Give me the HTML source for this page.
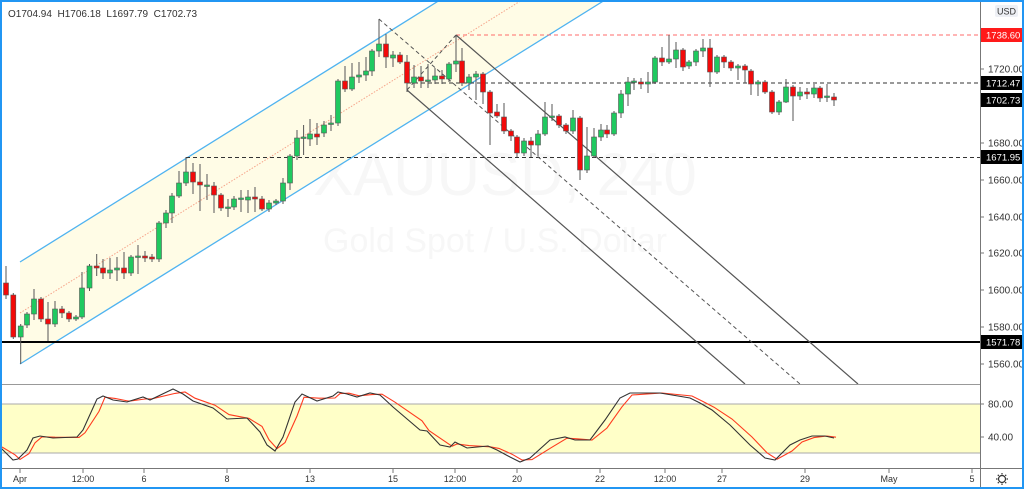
<!DOCTYPE html>
<html><head><meta charset="utf-8"><style>
html,body{margin:0;padding:0;background:#fff;}
#w{position:relative;width:1024px;height:489px;overflow:hidden;font-family:"Liberation Sans",sans-serif;}
svg text{font-family:"Liberation Sans",sans-serif;}
</style></head><body><div id="w">
<svg id="s" width="1024" height="489" xmlns="http://www.w3.org/2000/svg">
<rect x="0" y="0" width="1024" height="489" fill="#fff"/>
<text x="505" y="195" font-size="60" fill="#f7f7f7" text-anchor="middle">XAUUSD, 240</text>
<text x="495" y="252" font-size="34" fill="#f7f7f7" text-anchor="middle">Gold Spot / U.S. Dollar</text>
<polygon points="20,262 440,0 605,0 20,364" fill="#fffce6"/>
<line x1="20" y1="262" x2="440" y2="0" stroke="#4fb3f0" stroke-width="1.3"/>
<line x1="20" y1="364" x2="605" y2="0" stroke="#4fb3f0" stroke-width="1.3"/>
<line x1="20" y1="313" x2="522" y2="0" stroke="#f6a48a" stroke-width="1" stroke-dasharray="1.5,1.5"/>
<line x1="186" y1="157.5" x2="980" y2="157.5" stroke="#333" stroke-dasharray="4,3"/>
<line x1="407" y1="83" x2="980" y2="83" stroke="#333" stroke-dasharray="4,3"/>
<line x1="456" y1="35" x2="980" y2="35" stroke="#ff6b6b" stroke-dasharray="4,3"/>
<line x1="0" y1="342" x2="980" y2="342" stroke="#000" stroke-width="2"/>
<line x1="379" y1="19" x2="800" y2="384" stroke="#555" stroke-dasharray="4,3"/>
<line x1="407" y1="90" x2="456" y2="35" stroke="#555" stroke-dasharray="4,3"/>
<line x1="407" y1="90" x2="745" y2="384" stroke="#555" stroke-width="1.2"/>
<line x1="456" y1="35" x2="858" y2="384" stroke="#555" stroke-width="1.2"/>
<g id="c"></g>
<rect x="0" y="384" width="980" height="85" fill="#fff"/>
<line x1="0" y1="384.5" x2="980" y2="384.5" stroke="#999"/>
<rect x="0" y="404" width="980" height="49" fill="#ffffc8"/>
<line x1="0" y1="404" x2="980" y2="404" stroke="#aaa"/>
<line x1="0" y1="453" x2="980" y2="453" stroke="#aaa"/>
<polyline id="d" fill="none" stroke="#ff3b1f" stroke-width="1.1"/>
<polyline id="k" fill="none" stroke="#333" stroke-width="1.1"/>
<line x1="0" y1="468.5" x2="1024" y2="468.5" stroke="#777"/>
<line x1="980.5" y1="0" x2="980.5" y2="489" stroke="#777"/>
<g id="ax" font-size="10" fill="#333"></g>
<rect x="995" y="5" width="23" height="12" rx="2" fill="#eef0f5"/>
<text x="1006.5" y="14.5" font-size="9" fill="#333" text-anchor="middle">USD</text>
<text x="8" y="17" font-size="10" fill="#333">O1704.94&#160;&#160;H1706.18&#160;&#160;L1697.79&#160;&#160;C1702.73</text>
<g transform="translate(1002,479)" fill="none" stroke="#333" stroke-width="1.2">
<circle r="3.5"/><path d="M0,-6V-4.5M0,6V4.5M-6,0H-4.5M6,0H4.5M-4.2,-4.2L-3.2,-3.2M4.2,4.2L3.2,3.2M-4.2,4.2L-3.2,3.2M4.2,-4.2L3.2,-3.2"/>
</g>
<rect x="1" y="1" width="1022" height="487" fill="none" stroke="#2196f3" stroke-width="2"/>
</svg>
<script>
var NS="http://www.w3.org/2000/svg";
function el(p,t,a){var e=document.createElementNS(NS,t);for(var k in a)e.setAttribute(k,a[k]);p.appendChild(e);return e;}
var C=[[6,283,295,'r',266,299],[13.3,295,337,'r',293,339],[20.7,326,337,'g',324,364],[27,314,325,'g',312,328],[34,299,314,'g',289,320],[41,299,319,'r',297,322],[48,319,324,'r',302,341],[55,309,324,'g',301,327],[62,309,313,'r',306,318],[69,313,319,'r',311,322],[76,317,319,'g',315,321],[82,288,317,'g',272,319],[89.5,266,288,'g',264,291],[96.7,266,268,'r',254,276],[103,268,273,'r',259,279],[110,270,273,'g',258,279],[117,268,270,'g',257,281],[124,268,273,'r',252,279],[131,257,273,'g',255,276],[138,256,257,'g',245,274],[145,256,258,'r',251,262],[152,257,259,'r',254,262],[159,223,259,'g',221,262],[166,213,223,'g',210,228],[172,196,213,'g',193,223],[179,183,196,'g',171,198],[186,172,183,'g',157,186],[193,172,182,'r',163,194],[200,182,185,'r',164,211],[207,185,186,'g',174,200],[214,186,195,'r',182,213],[221,195,208,'r',193,211],[228,207,208,'g',199,217],[234,199,207,'g',196,210],[241,198,199,'g',190,212],[248,197,200,'g',190,213],[255,197,199,'r',187,212],[262,199,209,'r',196,211],[269,203,209,'g',200,212],[276,201,203,'g',199,205],[283,183,201,'g',178,204],[290,156,183,'g',154,190],[297,138,156,'g',130,160],[303.6,137,138,'g',125,155],[310,134,139,'g',119,146],[317,134,137,'r',123,145],[324,125,133,'g',121,137],[331,123,124,'g',115,131],[338,81,123,'g',79,126],[345,81,89,'r',66,92],[352,77,89,'g',63,91],[359,75,77,'g',62,83],[366,71,75,'g',57,81],[372,51,71,'g',49,76],[379,44,51,'g',19,57],[386,44,57,'r',34,68],[393,55,58,'g',51,67],[400,55,62,'r',52,64],[407,62,83,'r',55,92],[414,77,83,'g',65,88],[421,77,81,'r',66,88],[428,80,81,'g',64,88],[435,76,80,'g',68,84],[442,76,79,'r',70,84],[449,64,79,'g',62,82],[456,61,64,'g',35,72],[462,61,83,'r',48,86],[469,77,83,'g',74,90],[476,74,77,'g',71,100],[483,74,92,'r',72,104],[490,92,113,'r',90,145],[497,112,116,'r',104,118],[504,117,131,'r',103,134],[511,131,136,'r',129,141],[517,137,153,'r',135,157],[524,141,153,'g',138,156],[531,141,145,'r',137,157],[538,134,145,'g',130,156],[545,117,134,'g',102,136],[552,116,117,'g',104,121],[559,116,125,'r',114,128],[566,125,131,'r',123,134],[573,118,131,'g',110,134],[580,118,170,'r',116,180],[587,156,170,'g',127,173],[594,137,156,'g',128,158],[601,130,137,'g',124,141],[607,130,134,'r',125,138],[614,113,134,'g',111,136],[621,94,113,'g',90,118],[628,82,94,'g',77,106],[634,81,82,'g',78,90],[641,82,84,'r',78,89],[648,82,84,'g',72,93],[655,58,82,'g',56,84],[662,58,62,'r',47,66],[669,59,62,'g',35,64],[676,50,59,'g',42,68],[683,50,67,'r',48,71],[689,62,66,'g',60,69],[696,51,62,'g',49,66],[703,48,51,'g',39,57],[710,48,72,'r',39,87],[717,57,72,'g',55,74],[724,57,62,'r',55,68],[731,62,68,'r',60,71],[738,66,68,'g',64,80],[745,66,70,'r',64,83],[751,71,84,'r',69,95],[758,82,84,'g',80,96],[765,82,92,'r',80,94],[772,92,112,'r',90,114],[779,102,112,'g',100,115],[786,87,102,'g',79,103],[793,87,96,'r',85,121],[800,92,96,'g',87,100],[807,92,94,'r',88,99],[814,88,94,'g',84,98],[820,88,98,'r',86,102],[827,96,97,'g',84,102],[834,97,100,'r',93,106]];
var g=document.getElementById('c');
C.forEach(function(c){var x=c[0];
el(g,'line',{x1:x,y1:c[4],x2:x,y2:c[5],stroke:'#555','stroke-width':1});
var h=Math.max(c[2]-c[1],1.5);
el(g,'rect',{x:x-2.5,y:c[1],width:5,height:h,fill:c[3]=='g'?'#1fc95f':'#f20a0a',stroke:'#555','stroke-width':0.6});});
var K=[[0,447],[13,460],[18,459],[27,450],[33,438],[40,436],[53,438],[77,437],[83,430],[97,399],[103,396],[113,400],[127,402],[143,397],[150,400],[173,389],[183,394],[193,401],[213,408],[227,419],[247,418],[260,432],[267,445],[275,451],[283,437],[295,402],[302,394],[317,401],[333,396],[338,392],[347,394],[357,397],[370,393],[380,395],[393,407],[420,430],[427,431],[440,445],[450,447],[455,442],[467,448],[488,446],[497,450],[510,457],[520,462],[530,458],[550,440],[565,437],[575,440],[590,440],[605,420],[620,398],[630,393],[660,393],[690,398],[700,403],[712,410],[730,425],[750,445],[765,458],[775,460],[790,445],[800,440],[812,436],[825,436],[834,438]];
var D=K.map(function(p,i){var a=K[Math.max(0,i-1)];return [p[0]+2,(p[1]*0.6+a[1]*0.4)];});
document.getElementById('k').setAttribute('points',K.map(function(p){return p.join(',')}).join(' '));
document.getElementById('d').setAttribute('points',D.map(function(p){return p.join(',')}).join(' '));
var ax=document.getElementById('ax');
[[1720,69],[1680,143],[1660,180],[1640,217],[1620,253],[1600,290],[1580,327],[1560,364]].forEach(function(p){
el(ax,'line',{x1:980,y1:p[1],x2:984,y2:p[1],stroke:'#777'});var t=el(ax,'text',{x:988,y:p[1]+3.5});t.textContent=p[0]+'.00';});
[['80.00',404],['40.00',437]].forEach(function(p){el(ax,'line',{x1:980,y1:p[1],x2:984,y2:p[1],stroke:'#777'});var t=el(ax,'text',{x:988,y:p[1]+3.5});t.textContent=p[0];});
[['1738.60',35,'#ff1a1a'],['1712.47',83,'#000'],['1702.73',100,'#000'],['1671.95',157,'#000'],['1571.78',342,'#000']].forEach(function(p){
el(ax,'rect',{x:981,y:p[1]-7,width:41,height:14,fill:p[2]});var t=el(ax,'text',{x:986,y:p[1]+3.5,fill:'#fff','font-size':9.5});t.textContent=p[0];});
[['Apr',20],['12:00',83],['6',144],['8',227],['13',310],['15',393],['12:00',455],['20',517],['22',600],['12:00',665],['27',722],['29',805],['May',889],['5',972]].forEach(function(p){
el(ax,'line',{x1:p[1],y1:469,x2:p[1],y2:473,stroke:'#777'});var t=el(ax,'text',{x:p[1],y:482,'text-anchor':'middle','font-size':9});t.textContent=p[0];});
</script>
</div></body></html>
